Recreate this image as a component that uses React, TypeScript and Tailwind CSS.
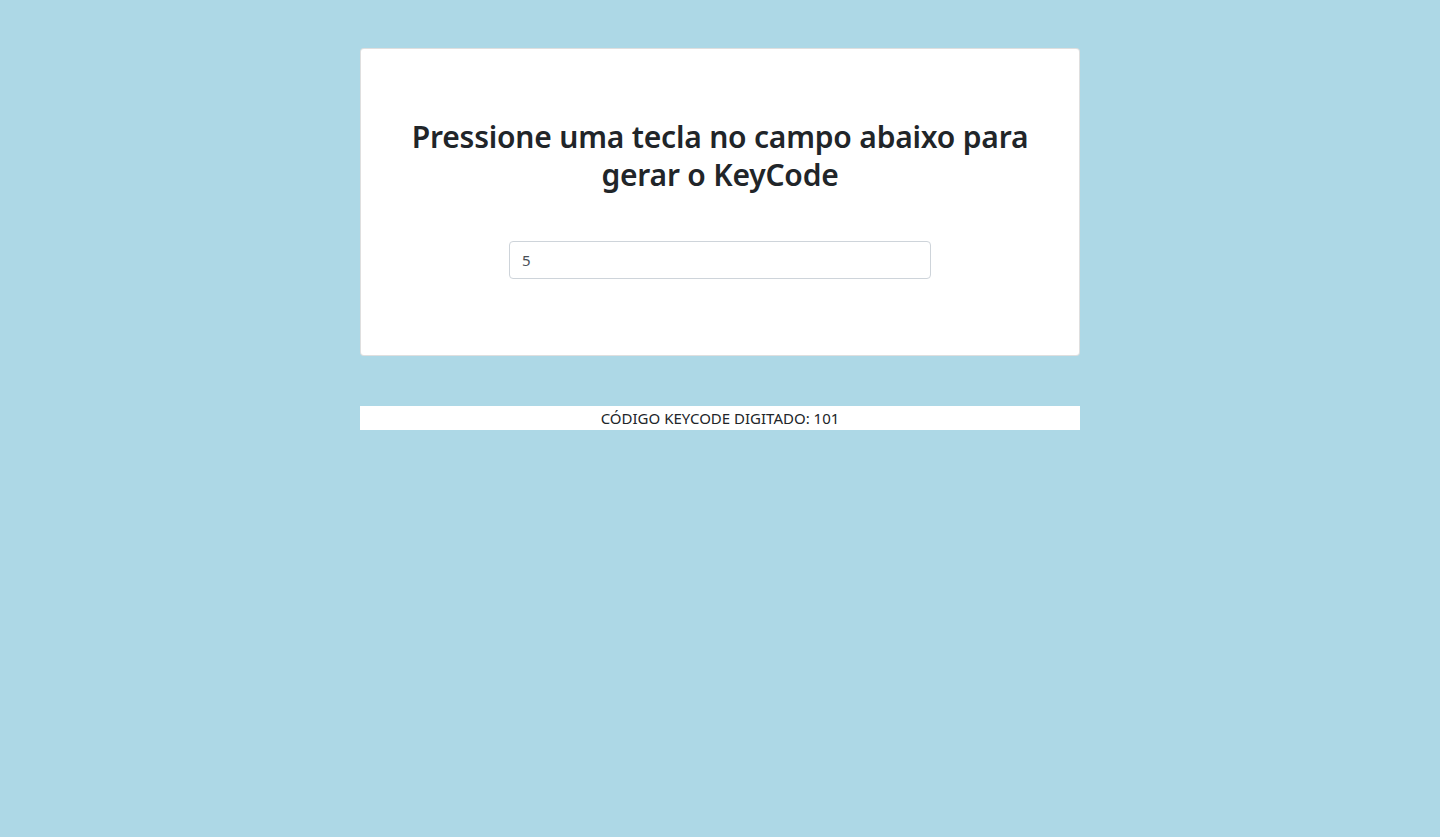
export default function App() {
  return (
    <div
      className="min-h-[837px] bg-[#add8e6] pt-12 text-[#212529]"
      style={{ fontFamily: '"Noto Sans", "Open Sans", sans-serif' }}
    >
      <div className="mx-auto w-[720px]">
        {/* Card */}
        <div className="flex h-[308px] flex-col items-center rounded border border-[rgba(0,0,0,0.125)] bg-white px-12 pt-[69px]">
          <h2 className="text-center text-[30px] leading-[38px] font-semibold tracking-[-0.2px]">
            Pressione uma tecla no campo abaixo para gerar o KeyCode
          </h2>
          <input
            type="text"
            defaultValue="5"
            className="mt-[47px] h-[38px] w-[422px] rounded border border-[#ced4da] bg-white px-3 text-[15px] text-[#495057] outline-none"
          />
        </div>

        {/* Result */}
        <div className="mt-[50px] h-6 bg-white text-center text-[15px] leading-6 uppercase">
          Código KeyCode digitado: 101
        </div>
      </div>
    </div>
  );
}
